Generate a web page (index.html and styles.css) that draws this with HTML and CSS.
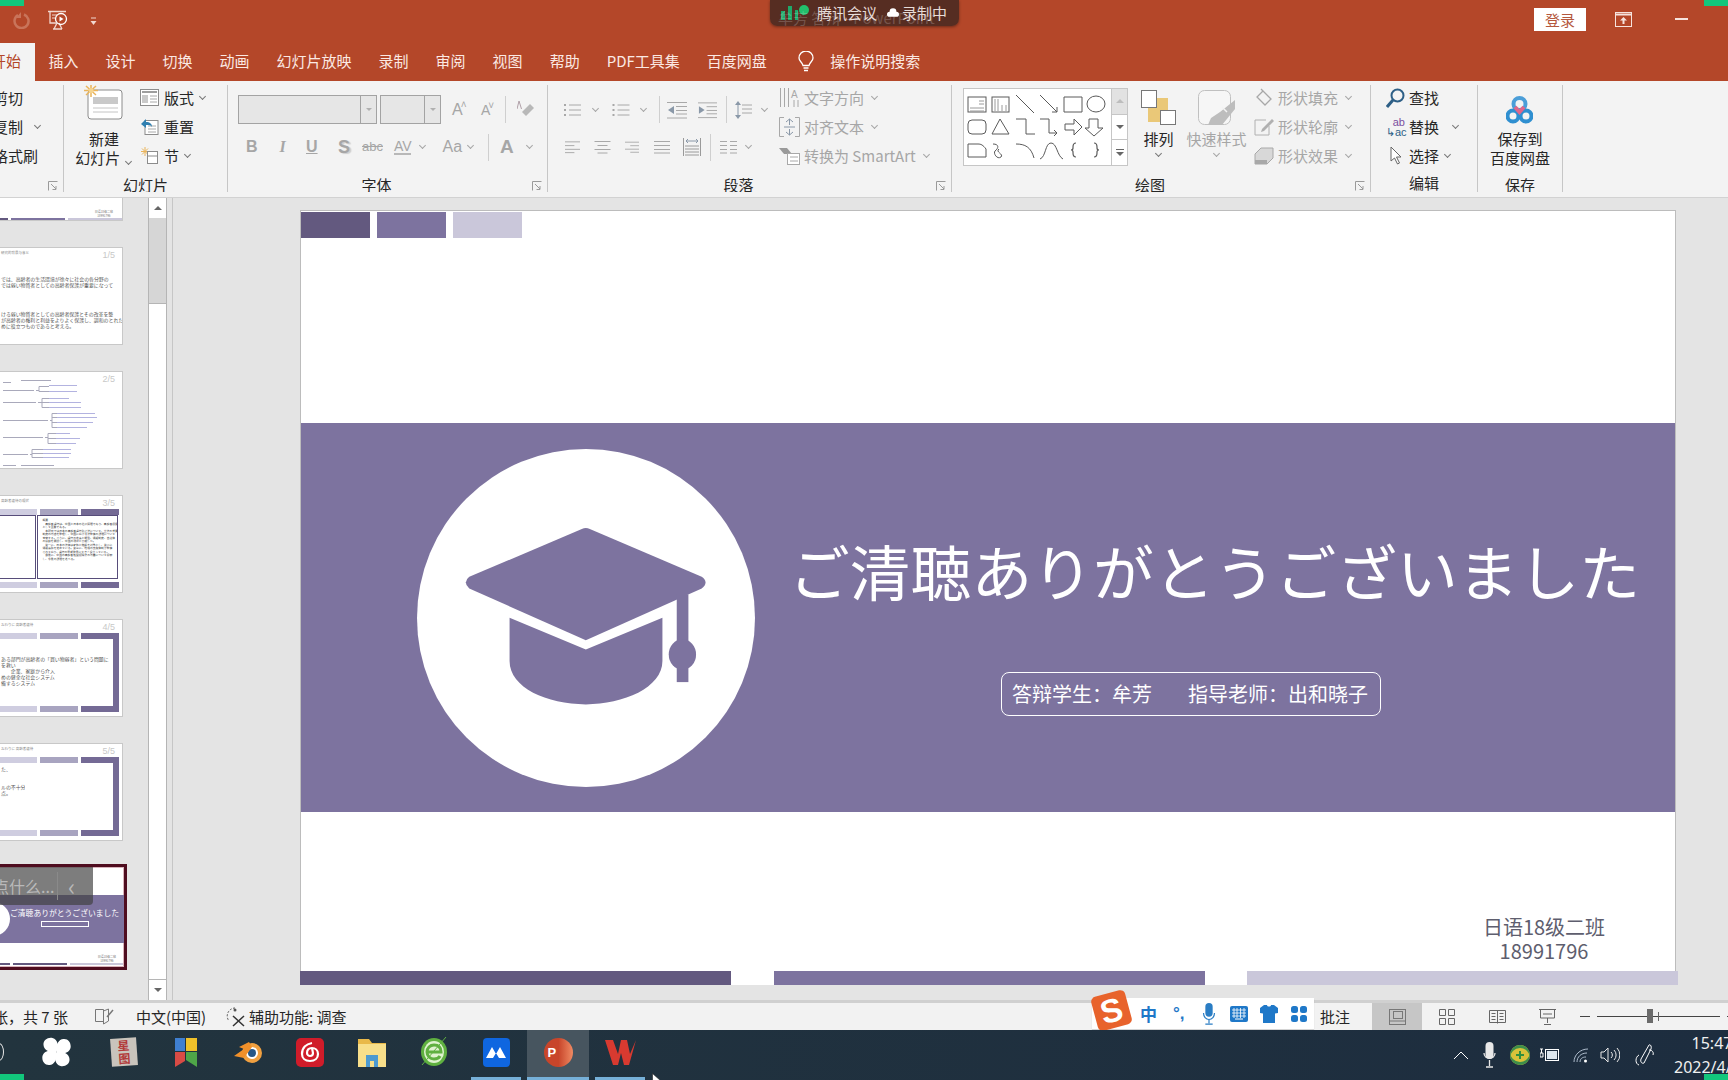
FILE: index.html
```html
<!DOCTYPE html>
<html lang="zh">
<head>
<meta charset="utf-8">
<title>PowerPoint</title>
<link rel="stylesheet" href="styles.css">
</head>
<body>
<svg class="defs" width="0" height="0">
  <symbol id="lines" viewBox="0 0 18 16"><path d="M6 3h12M6 8h12M6 13h12" stroke="#a8a8a8" fill="none"/><path d="M1 2h2v2H1zM1 7h2v2H1zM1 12h2v2H1z" fill="#a8a8a8"/></symbol>
  <symbol id="outdent" viewBox="0 0 20 18"><path d="M0 1.500h20M9 5.500h11M9 9.500h11M9 13h11M0 17h20" stroke="#a8a8a8" fill="none"/><path d="M1 9l6-4v8z" fill="#8a98a8"/></symbol>
  <symbol id="indent" viewBox="0 0 20 18"><path d="M0 1.500h20M9 5.500h11M9 9.500h11M9 13h11M0 17h20" stroke="#a8a8a8" fill="none"/><path d="M7 9l-6-4v8z" fill="#8a98a8"/></symbol>
  <symbol id="al" viewBox="0 0 16 14"><path d="M0 1.500h16M0 5.500h10M0 9.500h16M0 13h10" stroke="#a8a8a8" fill="none"/></symbol>
  <symbol id="ac" viewBox="0 0 16 14"><path d="M0 1.500h16M3 5.500h10M0 9.500h16M3 13h10" stroke="#a8a8a8" fill="none"/></symbol>
  <symbol id="ar" viewBox="0 0 16 14"><path d="M0 1.500h16M6 5.500h10M0 9.500h16M6 13h10" stroke="#a8a8a8" fill="none"/></symbol>
  <symbol id="launch" viewBox="0 0 10 10"><path d="M.5 9.500V.5h9M3 3l5 5M8 5v3.500H4.500" stroke="#9a9a9a" fill="none"/></symbol>
  <symbol id="petal" viewBox="0 0 29 30"><path d="M14.500 15C9 16 2 14 1.500 8 1 3 6 0 10.500 1 16 2.500 17 9 14.500 15z" fill="#fff"/></symbol>
</svg>

<div class="app">
  <header class="titlebar">
    <svg class="undo" width="18" height="18" viewBox="0 0 18 18"><path d="M11 3.500A7 7 0 1 1 5 4" fill="none" stroke="#c9745a" stroke-width="2.500"/><path d="M8 1v6H3z" fill="#c9745a"/></svg>
    <svg class="qat-show" width="20" height="20" viewBox="0 0 20 20"><path d="M0 1.500h18M2 2v11h6M5 19h9M9 13l-3 6M11 13l3 6" stroke="#f1d8d0" fill="none" stroke-width="1.300"/><path d="M4 5h5M4 8h3" stroke="#f1d8d0"/><circle cx="13" cy="9" r="5.500" fill="none" stroke="#fff" stroke-width="1.300"/><path d="M11.500 6.500l4 2.500-4 2.500z" fill="#fff"/></svg>
    <svg class="qat-more" width="7" height="9" viewBox="0 0 7 9"><path d="M1 1h5" stroke="#f1d8d0"/><path d="M.5 4h6L3.500 8z" fill="#f1d8d0"/></svg>
    <button class="login">登录</button>
    <svg class="ribbon-opt" width="17" height="15" viewBox="0 0 17 15"><rect x=".5" y=".5" width="16" height="14" fill="none" stroke="#f6e3dd"/><path d="M1 2.500h15" stroke="#f6e3dd" stroke-width="2"/><path d="M8.500 5l3.500 3.500H9.500V12h-2V8.500H5z" fill="#f6e3dd"/></svg>
    <span class="minimize"></span>
  </header>

  <nav class="tabs">
    <span class="tab active">开始</span>
    <span class="tab">插入</span>
    <span class="tab">设计</span>
    <span class="tab">切换</span>
    <span class="tab">动画</span>
    <span class="tab">幻灯片放映</span>
    <span class="tab">录制</span>
    <span class="tab">审阅</span>
    <span class="tab">视图</span>
    <span class="tab">帮助</span>
    <span class="tab">PDF工具集</span>
    <span class="tab">百度网盘</span>
    <svg class="bulb" width="16" height="21" viewBox="0 0 16 21"><path d="M5 14.500C4 11 1 10 1 7a7 7 0 0 1 14 0c0 3-3 4-4 7.500z" fill="none" stroke="#fff" stroke-width="1.300"/><path d="M5.500 17h5M6 19.500h4" stroke="#fff" stroke-width="1.500"/></svg>
    <span class="tab search">操作说明搜索</span>
  </nav>

  <section class="ribbon">
    <div class="group g1">
      <div class="rows clip-left">
        <div class="row">剪切</div>
        <div class="row">复制<i class="chev ml-copy"></i></div>
        <div class="row">格式刷</div>
      </div>
      <svg class="launcher" width="10" height="10"><use href="#launch"/></svg>
    </div>

    <div class="group g2">
      <div class="body">
        <div class="big big-new">
          <svg class="big-ic" width="40" height="36" viewBox="0 0 40 36"><rect x="4" y="6" width="34" height="29" rx="3" fill="#fff" stroke="#8c8c8c"/><rect x="9" y="13" width="25" height="7" fill="#c9c9c9"/><path d="M9 24h25M9 28h25" stroke="#c4c4c4"/><g stroke="#eab45a" stroke-width="1.500"><path d="M7 0v13M0 6.500h14M2 2l10 9M12 2L2 11"/></g><circle cx="7" cy="6.500" r="2.500" fill="#f5d48f"/></svg>
          <span>新建</span>
          <span>幻灯片<i class="chev ml6"></i></span>
        </div>
        <div class="rows small-col">
          <div class="row"><svg class="mr5" width="19" height="17" viewBox="0 0 19 17"><rect x=".5" y=".5" width="18" height="16" fill="#fff" stroke="#8c8c8c"/><path d="M2 3h15" stroke="#9e9e9e" stroke-width="2"/><rect x="2" y="6" width="6" height="8" fill="#c9c9c9"/><path d="M10 7h7M10 10h7M10 13h7" stroke="#a8a8a8"/></svg>版式<i class="chev ml6"></i></div>
          <div class="row"><svg class="mr5" width="19" height="17" viewBox="0 0 19 17"><rect x="5" y="2.500" width="13" height="14" fill="#fff" stroke="#8c8c8c"/><path d="M8 8h8M8 11h8M8 14h8" stroke="#a8a8a8"/><path d="M1 6l5-5v3c4 0 6 2 6 5-1-2-3-2-6-2v3z" fill="#2f7fb0"/></svg>重置</div>
          <div class="row"><svg class="mr5" width="19" height="17" viewBox="0 0 19 17"><path d="M5 0v9M1 4.500h8M2 1.500l6 6M8 1.500l-6 6" stroke="#eab45a"/><rect x="7.500" y="4.500" width="10" height="12" fill="#fff" stroke="#8c8c8c"/><path d="M7 9h11" stroke="#8c8c8c"/></svg>节<i class="chev ml6"></i></div>
        </div>
      </div>
      <div class="glabel">幻灯片</div>
    </div>

    <div class="group g3">
      <div class="body col">
        <div class="irow top-row p10">
          <div class="combo c-font"><b></b></div>
          <div class="combo c-size"><b></b></div>
          <span class="dis gl w13 ml11">A<sup>˄</sup></span>
          <span class="dis gl w11 ml16 sm">A<sup>˅</sup></span>
          <i class="vsep ml13"></i>
          <svg class="ml11" width="18" height="20" viewBox="0 0 18 20"><path d="M9 16l8-8-4-4-8 8z" fill="#b8b8b8"/><path d="M2 1l-2 8M2 1l2.500 8" stroke="#b0a0a8" fill="none"/></svg>
        </div>
        <div class="irow second-row p18">
          <span class="dis gl b w10">B</span>
          <span class="dis gl it w9 ml22">I</span>
          <span class="dis gl u w11 ml19">U</span>
          <span class="dis gl b shadow w10 ml21">S</span>
          <span class="dis gl strike w20 ml14">abc</span>
          <span class="dis gl av w17 ml12">AV</span>
          <i class="chev ml9"></i>
          <span class="dis gl w18 ml16">Aa</span>
          <i class="chev ml7"></i>
          <i class="vsep ml14"></i>
          <span class="dis gl big-a w13 ml11">A</span>
          <i class="chev ml14"></i>
        </div>
      </div>
      <div class="glabel off">字体</div>
      <svg class="launcher" width="10" height="10"><use href="#launch"/></svg>
    </div>

    <div class="group g4">
      <div class="body">
        <div class="col para">
          <div class="irow top-row p15">
            <svg width="18" height="16"><use href="#lines"/></svg><i class="chev ml12"></i>
            <svg class="ml11" width="19" height="16"><use href="#lines"/></svg><i class="chev ml11"></i>
            <i class="vsep ml12"></i>
            <svg class="ml7" width="20" height="18"><use href="#outdent"/></svg>
            <svg class="ml11" width="19" height="18"><use href="#indent"/></svg>
            <i class="vsep ml9"></i>
            <svg class="ml8" width="17" height="18" viewBox="0 0 17 18"><path d="M7 4h10M7 8h10M7 12h10" stroke="#a8a8a8"/><path d="M3 0l3 4H0zM3 18l3-4H0zM2.500 4h1v10h-1z" fill="#8a98a8"/></svg><i class="chev ml10"></i>
          </div>
          <div class="irow second-row p17">
            <svg width="15" height="14"><use href="#al"/></svg>
            <svg class="ml14" width="17" height="14"><use href="#ac"/></svg>
            <svg class="ml14" width="14" height="14"><use href="#ar"/></svg>
            <svg class="ml15" width="16" height="14" viewBox="0 0 16 14"><path d="M0 1.500h16M0 5.500h16M0 9.500h16M0 13h16" stroke="#a8a8a8"/></svg>
            <svg class="ml13" width="18" height="20" viewBox="0 0 18 20"><path d="M.5 1v18M17.500 1v18M2 9h14M2 12h14M2 15h14M2 18h14" stroke="#9a9a9a"/><path d="M3 4h12M5 2L3 4l2 2M13 2l2 2-2 2" stroke="#8a98a8" fill="none"/></svg>
            <i class="vsep ml9"></i>
            <svg class="ml9" width="17" height="14" viewBox="0 0 17 14"><path d="M0 1.500h7M0 5.500h7M0 9.500h7M0 13h7M10 1.500h7M10 5.500h7M10 9.500h7M10 13h7" stroke="#a8a8a8"/></svg>
            <i class="chev ml9"></i>
          </div>
        </div>
        <div class="rows dis-col">
          <div class="row"><svg class="mr4" width="21" height="20" viewBox="0 0 21 20"><path d="M1.500 0v19M5.500 0v19M9.500 0v19M15 12v7M19 12v7" stroke="#a8a8a8"/><text class="svgA" x="12" y="10">A</text></svg>文字方向<i class="chev ml8"></i></div>
          <div class="row"><svg class="mr4" width="21" height="20" viewBox="0 0 21 20"><path d="M5 .5H.5v19H5M16 .5h4.500v19H16" stroke="#a8a8a8" fill="none"/><path d="M10.500 2v6M10.500 12v6M7 5l3.500-3L14 5M7 15l3.500 3L14 15M5 10h11" stroke="#8a98a8" fill="none"/></svg>对齐文本<i class="chev ml8"></i></div>
          <div class="row"><svg class="mr4" width="21" height="18" viewBox="0 0 21 18"><path d="M0 1h8l5 6H5z" fill="#9a9a9a"/><rect x="8.500" y="6.500" width="12" height="11" fill="#fff" stroke="#a8a8a8"/><path d="M11 10h8M11 14h8" stroke="#a8a8a8"/></svg>转换为 SmartArt<i class="chev ml8"></i></div>
        </div>
      </div>
      <div class="glabel off">段落</div>
      <svg class="launcher" width="10" height="10"><use href="#launch"/></svg>
    </div>

    <div class="group g5">
      <div class="body">
        <div class="gallery">
          <svg width="147" height="76" viewBox="1 0 147 76">
            <g fill="none" stroke="#5a5a5a">
              <rect x="5" y="8" width="18" height="15"/><path d="M7 19h14M7 22h14M16 12h5M16 15h5" stroke="#9a9a9a"/>
              <rect x="29" y="8" width="17" height="15"/><path d="M32 10v12M35 10v12M39 16v6M43 16v6" stroke="#9a9a9a"/>
              <path d="M53 6l18 18M77 6l17 17M94 23v-5M94 23h-5M101 8h18v15h-18zM142 15a9 8 0 1 1-18 0 9 8 0 1 1 18 0z"/>
              <rect x="5" y="31" width="18" height="14" rx="4"/><path d="M37 30l-8 15h17zM53 30h10v15h9M77 30h9v14h8M91 41l3 3-3 3M102 35h9v-5l8 8-8 8v-5h-9zM126 30h9v9h5l-9 8-9-8h4z"/>
              <path d="M5 55h10c3 0 5 1 8 5v8H5v-7zM30 55c6 0 6 4 2 7-2 2 2 9 6 6 3-3-6-5-2-8M53 55c9 0 15 3 18 14M77 70c6-2 5-16 11-16 6 0 6 13 12 16"/>
              <path d="M113 54c-3 0-3 2-3 4v1c0 1-1 2-2 2 1 0 2 1 2 2v1c0 2 0 4 3 4M131 54c3 0 3 2 3 4v1c0 1 1 2 2 2-1 0-2 1-2 2v1c0 2 0 4-3 4" stroke-width="1.200"/>
            </g>
          </svg>
          <div class="gscroll">
            <span class="gs-btn active"><i class="up"></i></span>
            <span class="gs-btn"><i class="down"></i></span>
            <span class="gs-btn stack"><i class="down"></i></span>
          </div>
        </div>
        <div class="big w57 big-arr">
          <svg class="big-ic2" width="35" height="35" viewBox="0 0 35 35"><rect x="7" y="8" width="20" height="24" fill="#eac878"/><rect x=".5" y=".5" width="15" height="17" fill="#fff" stroke="#777"/><rect x="19.500" y="20.500" width="15" height="14" fill="#fff" stroke="#777"/></svg>
          <span>排列</span>
          <i class="chev"></i>
        </div>
        <div class="big w59 dis-big">
          <svg class="big-ic2" width="38" height="35" viewBox="0 0 38 35"><rect x=".5" y=".5" width="32" height="34" rx="6" fill="#f6f6f6" stroke="#c0c0c0"/><path d="M37 10v9L24 35H10l3-7 9-6z" fill="#bdbdbd"/><path d="M24 17l5 5" stroke="#f3f3f3" stroke-width="1.500"/></svg>
          <span>快速样式</span>
          <i class="chev"></i>
        </div>
        <div class="rows dis-col shape-col">
          <div class="row"><svg class="mr4" width="20" height="20" viewBox="0 0 20 20"><path d="M9 3l8 8-6 6-8-8zM7 1l2 2" fill="none" stroke="#a8a8a8" stroke-width="1.300"/></svg>形状填充<i class="chev ml8"></i></div>
          <div class="row"><svg class="mr4" width="20" height="20" viewBox="0 0 20 20"><path d="M12 3H1v15h14V9" fill="none" stroke="#b0b0b0"/><path d="M8 12l10-10 2 2-10 10-3 1z" fill="#b0b0b0"/></svg>形状轮廓<i class="chev ml8"></i></div>
          <div class="row"><svg class="mr4" width="20" height="20" viewBox="0 0 20 20"><path d="M7 2h12v10l-6 6H1V8z" fill="#d8d8d8" stroke="#a8a8a8"/><path d="M1 14h12v4H1z" fill="#a8a8a8"/></svg>形状效果<i class="chev ml8"></i></div>
        </div>
      </div>
      <div class="glabel off">绘图</div>
      <svg class="launcher" width="10" height="10"><use href="#launch"/></svg>
    </div>

    <div class="group g6">
      <div class="rows edit">
        <div class="row"><svg class="mr4" width="19" height="20" viewBox="0 0 19 20"><circle cx="11.500" cy="7.500" r="6" fill="none" stroke="#2d5f86" stroke-width="2"/><path d="M7 12l-6 7" stroke="#2d5f86" stroke-width="3"/></svg>查找</div>
        <div class="row"><span class="abac mr4"><em>ab</em><u>↳ac</u></span>替换<i class="chev ml14"></i></div>
        <div class="row"><svg class="mr8 ml4" width="11" height="19" viewBox="0 0 11 19"><path d="M1 1v14l3.500-3 3 6 2-1-3-6h4.500z" fill="#fff" stroke="#666"/></svg>选择<i class="chev ml6"></i></div>
      </div>
      <div class="glabel">编辑</div>
    </div>

    <div class="group g7">
      <div class="body center">
        <div class="big bd">
          <svg class="big-ic3" width="27" height="28" viewBox="0 0 27 28"><circle cx="13.500" cy="8" r="6" fill="none" stroke="#4b9ed8" stroke-width="4"/><circle cx="7" cy="20" r="5.500" fill="none" stroke="#2f8fd0" stroke-width="4"/><circle cx="20" cy="20" r="5.500" fill="none" stroke="#2f8fd0" stroke-width="4"/><path d="M9 11l4.500 5 4.500-5" fill="none" stroke="#e0668a" stroke-width="4"/></svg>
          <span>保存到</span>
          <span>百度网盘</span>
        </div>
      </div>
      <div class="glabel">保存</div>
    </div>
  </section>

  <main class="workspace">
    <aside class="thumbs">
      <div class="thumb partial">
        <div class="mini-no">日语18级二班<br>18991796</div>
        <div class="tbars"><i class="d"></i><i class="m"></i><i class="l"></i></div>
      </div>

      <div class="thumb">
        <div class="thead"><span class="tt">研究的背景与意义</span><span class="num">1/5</span></div>
        <div class="para-t one">では、高齢者の生活環境が徐々に社会の各分野の<br>では弱い物質者としての高齢者保護が重要になって</div>
        <div class="para-t two">ける弱い物質者としての高齢者保護とその改革を整<br>が高齢者の権利と利益をよりよく保護し、調和のとれた<br>めに役立つものであると考える。</div>
      </div>

      <div class="thumb">
        <div class="thead abs-free"><span class="num">2/5</span></div>
        <svg class="mindmap" width="123" height="97" viewBox="0 0 123 97">
          <g stroke="#8d8da5" fill="none" opacity=".75">
            <path d="M2 10.500h8M20 8.500h30M2 18.500h31M2 30.500h33M2 48.500h45M2 65.500h40M2 82.500h25M2 93.500h13M20 93.500h33"/>
            <path d="M35 18.500h3M38 14.500v5M38 14.500h10M38 19.500h10"/>
            <path d="M37 30.500h4M41 26.500v9M41 26.500h7M41 35.500h7M41 30.500h7"/>
            <path d="M49 48.500h2M51 41.500v14M51 41.500h5M51 45.500h5M51 50.500h5M51 55.500h5"/>
            <path d="M44 65.500h3M47 61.500v10M47 61.500h8M47 66.500h8M47 71.500h8"/>
            <path d="M29 82.500h2M31 77.500v8M31 77.500h11M31 81.500h11M31 85.500h11"/>
          </g>
          <g stroke="#9a9ad6" fill="none" opacity=".75">
            <path d="M48 13.500h28M48 19.500h28M48 26.500h20M48 30.500h32M48 35.500h32M56 41.500h38M56 45.500h40M56 50.500h36M56 55.500h30M55 61.500h14M55 66.500h24M55 71.500h20M42 77.500h28M42 81.500h28M42 85.500h26"/>
          </g>
        </svg>
      </div>

      <div class="thumb">
        <div class="thead"><span class="tt">高齢者虐待の現状</span><span class="num">3/5</span></div>
        <div class="tbars top"><i class="l"></i><i class="m2"></i><i class="d"></i></div>
        <div class="tbody two-box">
          <div class="tbox left"><span>高齢者の権利を</span></div>
          <div class="tbox right">概要<br>　高齢者虐待は、中国と日本の社会問題であり、高齢者保護制度<br>として重要である。<br>　本研究では日本の高齢者虐待防止法について、立法の背景と<br>制度の内容を整理し、中国における法整備の課題について<br>考察する。さらに、虐待の定義と類型、通報制度、自治体<br>の役割を検討し、中国の現状と比較した。<br>　第一に、日本の法律は家族と施設を対象とし、第二に<br>通報義務を定めている。第三に、地域の支援体制が整備<br>されており、虐待の早期発見に大きく役立っている。<br>　最後に、中国の高齢者権益保障法の改善について提案<br>し、今後の課題を述べる。</div>
        </div>
        <div class="tbars bottom"><i class="l"></i><i class="m2"></i><i class="d"></i></div>
      </div>

      <div class="thumb">
        <div class="thead"><span class="tt">おわりに 高齢者虐待</span><span class="num">4/5</span></div>
        <div class="tbars top"><i class="l"></i><i class="m2"></i><i class="d"></i></div>
        <div class="tbody framed"><div class="para-t">ある部門が高齢者の「買い物弱者」という問題に<br>を救い<br>　　企業、家庭から介入<br>めの健全な社会システム<br>備するシステム</div><b></b></div>
        <div class="tbars bottom"><i class="l"></i><i class="m2"></i><i class="d"></i></div>
      </div>

      <div class="thumb">
        <div class="thead"><span class="tt">おわりに 高齢者虐待</span><span class="num">5/5</span></div>
        <div class="tbars top"><i class="l"></i><i class="m2"></i><i class="d"></i></div>
        <div class="tbody framed"><div class="para-t low">た、<br><br><br>ルの不十分<br>点。</div><b></b></div>
        <div class="tbars bottom"><i class="l"></i><i class="m2"></i><i class="d"></i></div>
      </div>

      <div class="thumb current">
        <div class="cur-top"></div>
        <div class="cur-band">
          <span class="cur-circle"></span>
          <div class="cur-text">
            <span>ご清聴ありがとうございました</span>
            <i></i>
          </div>
        </div>
        <div class="cur-foot"><span>日语18级二班<br>18991796</span></div>
        <div class="tbars"><i class="d"></i><i class="d"></i><i class="l"></i></div>
        <div class="popup"><span class="ptext">点什么...</span><i></i><span class="pback">‹</span></div>
      </div>
    </aside>

    <div class="vscroll">
      <span class="vs-btn"><i class="up"></i></span>
      <span class="vs-track"></span>
      <span class="vs-thumb"></span>
      <span class="vs-btn"><i class="down"></i></span>
    </div>

    <div class="canvas">
      <article class="slide">
        <div class="blocks"><i class="dark"></i><i class="mid"></i><i class="light"></i></div>
        <div class="band">
          <div class="circle">
            <svg width="338" height="338" viewBox="50 53 1015 1015">
              <path fill="#7d739f" d="M545 293Q557 288 569 293L905 437Q928 453 905 472L557 627 207 472Q186 453 207 437Z"/>
              <path fill="#7d739f" d="M328 560L557 655 787 560V690C787 770 670 820 557 820 440 820 328 770 328 690Z"/>
              <rect fill="#7d739f" x="830" y="490" width="35" height="263"/>
              <ellipse fill="#7d739f" cx="847" cy="670" rx="41" ry="46"/>
            </svg>
          </div>
          <div class="thanks">
            <h1>ご清聴ありがとうございました</h1>
            <div class="pill"><span>答辩学生：牟芳</span><span>指导老师：出和晓子</span></div>
          </div>
        </div>
        <div class="slide-foot"><p>日语18级二班<br>18991796</p></div>
        <div class="bars"><i class="dark"></i><i class="mid"></i><i class="light"></i></div>
      </article>
    </div>
  </main>

  <footer class="status">
    <span class="st-count">张，共 7 张</span>
    <svg class="st-notes" width="19" height="18" viewBox="0 0 19 18"><path d="M.5 1.500h8v12H.5zM8.500 3l5-2v12l-5 3z" fill="none" stroke="#777"/><path d="M12 9l6-7" stroke="#777" stroke-width="1.500"/></svg>
    <span class="st-lang">中文(中国)</span>
    <svg class="st-acc" width="20" height="20" viewBox="0 0 20 20"><path d="M9 1a8 8 0 0 0-6 13" fill="none" stroke="#555" stroke-dasharray="2 1.500"/><path d="M7 9l11 10M18 9L7 19" stroke="#333" stroke-width="1.500"/><circle cx="9" cy="3" r="1.500" fill="#555"/></svg>
    <span class="st-a11y">辅助功能: 调查</span>
    <span class="st-comment">批注</span>
    <span class="view active"><svg width="17" height="16" viewBox="0 0 17 16"><rect x=".5" y=".5" width="16" height="15" fill="none" stroke="#777"/><rect x="4.500" y="2.500" width="9" height="7" fill="none" stroke="#777"/><path d="M.5 12h16" stroke="#777"/></svg></span>
    <span class="view"><svg width="16" height="16" viewBox="0 0 16 16"><path d="M.5.5h6v6h-6zM9.500.5h6v6h-6zM.5 9.500h6v6h-6zM9.500 9.500h6v6h-6z" fill="none" stroke="#666"/></svg></span>
    <span class="view"><svg width="17" height="16" viewBox="0 0 17 16"><path d="M.5 1.500h16v12h-16zM8.500 1.500v13M2.500 4.500h4M2.500 7.500h4M2.500 10.500h4M10.500 4.500h4M10.500 7.500h4M10.500 10.500h4" fill="none" stroke="#666"/></svg></span>
    <span class="view"><svg width="17" height="16" viewBox="0 0 17 16"><path d="M0 .5h17M1.500 1v8h14V1M8.500 9v5M5 15.500h7M4 5h9" fill="none" stroke="#666"/></svg></span>
    <div class="zoom"><i class="minus"></i><span class="track"><b></b><u></u></span><i class="plus"></i></div>

    <div class="ime">
      <span class="ime-s">S</span>
      <span class="ime-zh">中</span>
      <span class="ime-punc">°,</span>
      <svg class="ime-mic" width="14" height="24" viewBox="0 0 14 24"><rect x="3" y="0" width="8" height="15" rx="4" fill="#2a7dc4"/><path d="M1 11a6 7 0 0 0 12 0M7 18v4M3 23h8" fill="none" stroke="#2a7dc4" stroke-width="1.300"/></svg>
      <svg class="ime-kb" width="18" height="16" viewBox="0 0 18 16"><rect width="18" height="16" rx="2" fill="#1f78c8"/><path d="M2 4h14M2 7h14M2 10h14M4 2v10M7 2v10M10.500 2v10M14 2v10" stroke="#fff" stroke-width=".8"/><path d="M5 13h8" stroke="#fff"/></svg>
      <svg class="ime-shirt" width="18" height="18" viewBox="0 0 18 18"><path d="M4 0h3c0 2 4 2 4 0h3l4 3v5l-3 .5V18H3V8.500L0 8V3z" fill="#1f78c8"/></svg>
      <svg class="ime-apps" width="16" height="16" viewBox="0 0 16 16"><rect width="7" height="7" rx="2.500" fill="#1f78c8"/><rect x="9" width="7" height="7" rx="2.500" fill="#1f78c8"/><rect y="9" width="7" height="7" rx="2.500" fill="#1f78c8"/><rect x="9" y="9" width="7" height="7" rx="2.500" fill="#1f78c8"/></svg>
    </div>
  </footer>

  <div class="taskbar">
    <span class="tb-start"></span>
    <span class="tb tb-first"><svg width="29" height="30" viewBox="0 0 29 30"><use href="#petal"/><use href="#petal" transform="rotate(90 14.500 15)"/><use href="#petal" transform="rotate(180 14.500 15)"/><use href="#petal" transform="rotate(270 14.500 15)"/></svg></span>
    <span class="tb"><span class="ic-xing">星<br>图</span></span>
    <span class="tb"><svg width="22" height="29" viewBox="0 0 22 29"><path d="M0 0h10v13H0z" fill="#3f7fd0"/><path d="M11 0h11v13H11z" fill="#efc12a"/><path d="M0 14h10v9l-10 6z" fill="#d94b45"/><path d="M11 14h11v15l-11-7z" fill="#4fa648"/></svg></span>
    <span class="tb"><svg width="29" height="24" viewBox="0 0 29 24"><circle cx="18" cy="13" r="10" fill="#f0a040"/><circle cx="18" cy="13" r="6" fill="#fff"/><circle cx="18" cy="13" r="4" fill="#265787"/><path d="M0 16l10-7-5-2 10-5 3 5-8 11z" fill="#f0902a"/></svg></span>
    <span class="tb"><span class="ic-163"><svg width="20" height="22" viewBox="0 0 20 22"><path d="M12 2C6 3 2 7 2 13c0 4 3 7 8 7s8-3 8-7-3-6-6-6c-3 0-5 2-5 5 0 2 2 3 3 3 2 0 3-1 3-3l-1-5" fill="none" stroke="#fff" stroke-width="2.200"/></svg></span></span>
    <span class="tb"><svg width="28" height="29" viewBox="0 0 28 29"><path d="M0 1h11l3 4h14v24H0z" fill="#e9b949"/><path d="M0 6h28v23H0z" fill="#f8df8a"/><path d="M8 29V17h12v12h-4v-6h-4v6z" fill="#4d9ad0"/></svg></span>
    <span class="tb"><svg width="28" height="34" viewBox="0 0 28 34"><ellipse cx="14" cy="17" rx="13" ry="14" fill="#5fb040"/><ellipse cx="14" cy="17" rx="10" ry="11" fill="#dff2cf"/><path d="M7 17h14c0-5-3-7-7-7s-7 3-7 7 3 7 7 7c3 0 5-1 6-3" fill="none" stroke="#5fb040" stroke-width="3"/><path d="M2 30L26 2" stroke="#5fb040" stroke-width="1"/></svg></span>
    <span class="tb run"><span class="ic-mt"><svg width="20" height="14" viewBox="0 0 20 14"><path d="M0 13L6 2l4 7 4-7 6 11h-7l-3-5-3 5z" fill="#fff"/></svg></span></span>
    <span class="tb run on"><span class="ic-ppt"><em>P</em></span></span>
    <span class="tb run"><svg width="31" height="28" viewBox="0 0 31 28"><path d="M0 2h8l5 14 3-14h6l3 14 6-14-7 25h-5l-3-12-3 12H8z" fill="#d83a30"/></svg></span>
    <svg class="cursor" width="9" height="14" viewBox="0 0 9 14"><path d="M.5 .5v11l3-2.500 2 4.500 2-1-2-4.500h3.500z" fill="#fff" stroke="#222" stroke-width=".6"/></svg>
    <div class="tray">
      <svg class="t1" width="16" height="9" viewBox="0 0 16 9"><path d="M1 8l7-7 7 7" fill="none" stroke="#fff"/></svg>
      <svg class="t2" width="13" height="26" viewBox="0 0 13 26"><rect x="2.500" width="8" height="17" rx="4" fill="#e8e8e8"/><path d="M1 11c0 7 11 7 11 0M6.500 18v6M3 25h7" fill="none" stroke="#e8e8e8" stroke-width="1.300"/></svg>
      <span class="t3"><i></i></span>
      <svg class="t4" width="19" height="14" viewBox="0 0 19 14"><rect x="5.500" y="1.500" width="13" height="11" fill="none" stroke="#fff"/><rect x="7" y="3" width="10" height="8" fill="#dce6ee"/><path d="M0 1h3M1.500 1v4M0 5h3v4H0z" stroke="#fff" fill="none"/></svg>
      <svg class="t5" width="16" height="15" viewBox="0 0 16 15"><path d="M1 14C1 7 7 1 15 1M4 14c0-5 4-9 10-9M7 14c0-3 2-5 6-5" fill="none" stroke="#aebccc"/><circle cx="12.500" cy="13" r="1.500" fill="#fff"/></svg>
      <svg class="t6" width="20" height="16" viewBox="0 0 20 16"><path d="M1 5h3l4-4v14l-4-4H1z" fill="none" stroke="#e8e8e8"/><path d="M11 5a4 4 0 0 1 0 6M14 3a7 7 0 0 1 0 10M17 1a10 10 0 0 1 0 14" fill="none" stroke="#e8e8e8"/></svg>
      <svg class="t7" width="20" height="22" viewBox="0 0 20 22"><path d="M14 1l-8 14c-1 3 1 5 3 4l7-14c1-3-1-5-2-4zM4 11C0 13 0 20 4 21M14 6c3 0 5 2 4 5" fill="none" stroke="#fff"/></svg>
      <div class="clock"><span>15:47</span><span>2022/4/25</span></div>
    </div>
  </div>

  <div class="meeting">
    <span class="ghost">牟芳 答辩 - PowerPoint</span>
    <svg width="24" height="15" viewBox="0 0 24 15"><path d="M2 6h4v9H2zM9 1h4v14H9zM16 5h3v10h-3z" fill="#1fa86a"/></svg>
    <i class="dot"></i>
    <span class="mt-name">腾讯会议</span>
    <svg class="cloud" width="12" height="9" viewBox="0 0 14 10"><path d="M3 10a3 3 0 0 1 0-6 4 4 0 0 1 8 0 3 3 0 0 1 0 6z" fill="#fff"/></svg>
    <span class="mt-rec">录制中</span>
  </div>

  <i class="mark m-tl"></i><i class="mark m-tr"></i><i class="mark m-bl"></i><i class="mark m-br"></i>
</div>
</body>
</html>
```

FILE: styles.css
```css
* { box-sizing: border-box; }
html, body { margin: 0; padding: 0; }
body { width: 1728px; height: 1080px; overflow: hidden; background: #e4e4e4; font-family: "Noto Sans CJK SC", "Noto Sans", sans-serif; color: #262626; font-size: 15px; }
.defs { position: absolute; }
i, em { font-style: normal; }
.app { position: relative; width: 1728px; height: 1080px; overflow: hidden; display: flex; flex-direction: column; }

/* title bar */
.titlebar { height: 43px; background: #b44729; display: flex; align-items: center; flex: none; }
.undo { margin-left: 13px; margin-top: -4px; }
.qat-show { margin-left: 17px; margin-top: -4px; }
.qat-more { margin-left: 22px; margin-top: 0; }
.login { margin-left: 1437px; margin-top: -4px; width: 52px; height: 23px; border: 0; padding: 0; background: #fff; color: #b5583d; font: 15px/23px "Noto Sans CJK SC", sans-serif; }
.ribbon-opt { margin-left: 29px; margin-top: -5px; }
.minimize { margin-left: 43px; margin-top: -5px; width: 13px; height: 2px; background: #f6e3dd; }

/* tabs */
.tabs { height: 38px; background: #b44729; display: flex; align-items: stretch; margin-left: 0; flex: none; color: #fff; }
.tab { padding: 0 13.500px; line-height: 36px; color: #fbe9e3; flex: none; }
.tab.active { margin-left: -23px; padding-left: 14px; padding-right: 14px; width: 58px; background: #f3f3f3; color: #b44729; }
.bulb { margin: 8px 2px 0 18px; flex: none; }
.search { padding-left: 14px; }

/* ribbon */
.ribbon { height: 117px; background: #f3f3f3; border-bottom: 1px solid #d2d2d2; padding-top: 4px; display: flex; align-items: flex-start; flex: none; }
.group { position: relative; height: 107px; border-right: 1px solid #c6c6c6; overflow: hidden; flex: none; }
.g1 { width: 64px; }
.g2 { width: 164px; }
.g3 { width: 320px; }
.g4 { width: 404px; }
.g5 { width: 419px; }
.g6 { width: 107px; }
.g7 { width: 85px; }
.body { height: 87px; display: flex; }
.body.col, .col { flex-direction: column; display: flex; }
.body.center { justify-content: center; }
.rows { display: flex; flex-direction: column; margin-top: -2px; }
.row { height: 29px; display: flex; align-items: center; white-space: nowrap; flex: none; }
.clip-left { margin-left: -7px; }
.glabel { height: 20px; line-height: 26px; text-align: center; color: #262626; }
.glabel.off { padding-right: 22px; }
.launcher { position: absolute; right: 5px; bottom: 1px; }
.chev { display: inline-block; width: 5px; height: 5px; border-right: 1px solid #777; border-bottom: 1px solid #777; transform: rotate(45deg); margin: -3px 1.500px 0; flex: none; }
.ml-copy { margin-left: 12px; }
.big { display: flex; flex-direction: column; align-items: center; line-height: 19px; flex: none; white-space: nowrap; }
.big-new { width: 66px; margin-left: 7px; padding-top: 0; }
.big-ic { margin-bottom: 9px; margin-top: -1px; }
.big-ic2 { margin: 5px 0 4px; }
.big-ic3 { margin: 11px 0 5px; }
.big .chev { margin-top: 3px; }
.small-col { margin-left: 3px; }
.w57 { width: 57px; }
.w59 { width: 59px; }
.big-arr { margin-left: 2px; }
.dis-big { color: #a6a6a6; }
.dis-col { color: #a6a6a6; }
.dis-col .chev, .dis-big .chev { border-color: #a6a6a6; }
.para { width: 231px; flex: none; }
.shape-col { margin-left: 8px; }

.irow { display: flex; align-items: center; flex: none; }
.irow > * { flex: none; }
.top-row { height: 29px; margin-top: 10px; }
.second-row { height: 22px; margin-top: 12px; }
.irow .chev { border-color: #a6a6a6; }
.combo { height: 29px; background: #e6e6e6; border: 1px solid #a3a3a3; position: relative; }
.combo b { position: absolute; right: 0; top: 0; bottom: 0; width: 16px; border-left: 1px solid #a3a3a3; }
.combo b::after { content: ""; position: absolute; left: 5px; top: 12px; border: 3px solid transparent; border-top-color: #b0b0b0; }
.c-font { width: 139px; }
.c-size { width: 61px; margin-left: 3px; }
.vsep { width: 1px; height: 27px; background: #cfcfcf; }
.dis { color: #a6a6a6; }
.gl { display: inline-block; text-align: center; line-height: 20px; white-space: nowrap; font-family: "Liberation Sans", sans-serif; font-size: 16px; }
.gl sup { font-size: 10px; line-height: 0; margin-left: -2px; }
.gl.sm { font-size: 14px; }
.gl.b { font-weight: 700; }
.gl.it { font-style: italic; font-weight: 700; font-family: "Liberation Serif", serif; }
.gl.u { text-decoration: underline; font-weight: 700; }
.gl.shadow { text-shadow: 2px 1px 1px #cfcfcf; font-size: 18px; }
.gl.strike { text-decoration: line-through; font-size: 13px; }
.gl.av { font-size: 14px; line-height: 14px; border-bottom: 2px solid #b8b8b8; }
.gl.big-a { font-size: 19px; font-weight: 700; }
.svgA { font: 10px "Liberation Sans", sans-serif; fill: #a8a8a8; }
.p10 { padding-left: 10px; }
.p15 { padding-left: 15px; }
.p17 { padding-left: 17px; }
.p18 { padding-left: 18px; }
.w9 { width: 9px; } .w10 { width: 10px; } .w11 { width: 11px; } .w13 { width: 13px; }
.w17 { width: 17px; } .w18 { width: 18px; } .w20 { width: 20px; }
.mr4 { margin-right: 4px; } .mr5 { margin-right: 5px; } .mr8 { margin-right: 8px; }
.ml4 { margin-left: 4px; } .ml6 { margin-left: 6px; } .ml7 { margin-left: 7px; } .ml8 { margin-left: 8px; }
.ml9 { margin-left: 9px; } .ml10 { margin-left: 10px; } .ml11 { margin-left: 11px; } .ml12 { margin-left: 12px; }
.ml13 { margin-left: 13px; } .ml14 { margin-left: 14px; } .ml15 { margin-left: 15px; } .ml16 { margin-left: 16px; }
.ml19 { margin-left: 19px; } .ml21 { margin-left: 21px; } .ml22 { margin-left: 22px; }

.gallery { width: 165px; height: 78px; margin: 3px 0 0 11px; background: #fff; border: 1px solid #c6c6c6; display: flex; flex: none; }
.gallery svg { flex: none; }
.gscroll { width: 17px; border-left: 1px solid #c6c6c6; display: flex; flex-direction: column; }
.gs-btn { flex: 1; border-bottom: 1px solid #c6c6c6; display: flex; align-items: center; justify-content: center; }
.gs-btn:last-child { border-bottom: 0; }
.gs-btn.active { background: #e2e2e2; }
.gs-btn.stack { flex-direction: column; gap: 2px; }
.gs-btn.stack::before { content: ""; width: 8px; height: 1px; background: #666; }
.up { width: 0; height: 0; border: 4px solid transparent; border-bottom-color: #666; border-top: 0; display: block; }
.down { width: 0; height: 0; border: 4px solid transparent; border-top-color: #666; border-bottom: 0; display: block; }
.gs-btn .up { border-bottom-color: #bdbdbd; }

.edit { padding-left: 15px; height: 87px; }
.abac { width: 19px; display: inline-flex; flex-direction: column; font: 11px/10px "Liberation Sans", sans-serif; text-align: right; }
.abac em { color: #7b4fa0; }
.abac u { color: #2d5f86; text-decoration: none; }

/* workspace */
.workspace { height: 805px; display: flex; flex: none; background: #e4e4e4; border-bottom: 3px solid #d0d0d0; }
.thumbs { width: 148px; height: 802px; overflow: hidden; display: flex; flex-direction: column; align-items: flex-start; gap: 26px; flex: none; }
.thumb { position: relative; width: 172px; height: 98px; margin-left: -49px; background: #fff; border: 1px solid #c8c8c8; flex: none; overflow: hidden; display: flex; flex-direction: column; }
.thumb.partial { height: 23px; justify-content: flex-end; align-items: stretch; border-top: 0; }
.mini-no { align-self: flex-end; margin-right: 9px; font-size: 3px; line-height: 4px; color: #777; text-align: center; }
.tbars { display: flex; gap: 3px; height: 2px; flex: none; justify-content: flex-end; margin: 0; }
.tbars .d { width: 54px; background: #63597f; }
.tbars .m { width: 54px; background: #7d739f; }
.tbars .l { width: 54px; background: #cac7da; }
.tbars .m2 { width: 38px; background: #a8a4c0; }
.tbars.top, .tbars.bottom { height: 6px; padding-right: 3px; }
.tbars.top .d, .tbars.bottom .d { width: 39px; background: #746a95; }
.tbars.top .l, .tbars.bottom .l { width: 87px; background: #cfcde0; }
.thead { height: 13px; display: flex; justify-content: space-between; align-items: flex-start; padding: 0 7px 0 49px; flex: none; }
.tt { font-size: 3.500px; line-height: 10px; color: #888; white-space: nowrap; }
.num { margin-left: auto; font: 9px/14px "Liberation Sans", sans-serif; color: #c8c8c8; }
.para-t { font-size: 4.900px; line-height: 6px; color: #555; white-space: nowrap; }
.para-t.one { padding-left: 49px; margin-top: 15px; }
.para-t.two { padding-left: 49px; margin-top: 23px; }
.abs-free { position: absolute; right: 0; top: 0; }
.mindmap { margin-left: 49px; flex: none; }
.tbody { flex: none; }
.two-box { display: flex; gap: 1px; height: 64px; padding: 0 4px 0 0; margin-bottom: 3px; justify-content: flex-end; }
.tbox { border: 1px solid #574d7a; height: 64px; font-size: 2.800px; line-height: 3.500px; color: #444; overflow: hidden; white-space: nowrap; }
.tbox.left { width: 85px; text-align: left; padding: 2px; }
.tbox.right { width: 81px; padding: 3px 4px; }
.framed { height: 67px; display: flex; justify-content: space-between; padding-right: 3px; }
.framed b { width: 6px; background: #746a95; flex: none; }
.framed .para-t { padding: 17px 0 0 49px; overflow: hidden; }
.framed .para-t.low { padding: 3px 0 0 49px; }

.thumb.current { height: 106px; margin-top: -3px; width: 176px; border: 3px solid #4f0d1f; outline: 1px solid #d9b3bb; outline-offset: -4px; }
.cur-top { height: 28px; flex: none; }
.cur-band { height: 48px; background: #7d739f; display: flex; flex: none; position: relative; }
.cur-circle { width: 34px; height: 34px; margin: 7px 0 0 22px; border-radius: 50%; background: #fff; flex: none; }
.cur-text { display: flex; flex-direction: column; align-items: center; margin-left: 0; padding-top: 12px; font-size: 7.800px; line-height: 11px; color: #fff; white-space: nowrap; }
.cur-text i { width: 48px; height: 6px; margin-top: 3px; border: 1px solid #fff; }
.cur-foot { flex: 1; display: flex; justify-content: flex-end; padding: 12px 8px 0 0; font-size: 3px; line-height: 4px; color: #777; text-align: center; }
.thumb.current .tbars { height: 2px; margin-bottom: 2px; }
.popup { position: absolute; left: 0; top: 0; width: 139px; height: 38px; padding-left: 39px; background: rgba(64, 64, 64, .68); border-radius: 0 0 4px 0; display: flex; align-items: center; color: #b9b9b9; font-size: 16px; white-space: nowrap; }
.ptext { width: 64px; overflow: hidden; flex: none; }
.popup i { width: 1px; height: 28px; background: #8a8a8a; flex: none; }
.pback { margin-left: 10px; font-size: 24px; line-height: 30px; }

.vscroll { width: 19px; height: 802px; border-left: 1px solid #b5b5b5; border-right: 1px solid #b5b5b5; display: flex; flex-direction: column; flex: none; }
.vs-btn { height: 20px; flex: none; background: #fff; display: flex; align-items: center; justify-content: center; }
.vs-track { height: 85px; background: #d6d6d6; flex: none; }
.vs-thumb { flex: 1; background: #fff; border-top: 1px solid #b5b5b5; border-bottom: 1px solid #b5b5b5; }

.canvas { flex: 1; height: 802px; margin-left: 5px; border-left: 1px solid #c6c6c6; padding: 12px 0 0 127px; }

/* slide */
.slide { width: 1376px; height: 775px; background: #fff; border-left: 1px solid #bcbcbc; border-top: 1px solid #bcbcbc; border-right: 1px solid #bcbcbc; display: flex; flex-direction: column; }
.blocks { display: flex; gap: 7px; padding-top: 1px; height: 27px; flex: none; }
.blocks i { width: 69px; height: 26px; }
.dark { background: #63597f; }
.mid { background: #7d739f; }
.light { background: #cac7da; }
.band { height: 389px; margin-top: 185px; background: #7d739f; display: flex; align-items: center; flex: none; }
.circle { width: 338px; height: 338px; margin-left: 116px; border-radius: 50%; background: #fff; flex: none; }
.circle svg { display: block; }
.thanks { margin-left: 34px; padding-top: 15px; color: #fff; }
.thanks h1 { margin: -4px 0 0; font-size: 60.800px; line-height: 80px; font-weight: 400; white-space: nowrap; letter-spacing: 0; }
.pill { width: 380px; height: 44px; margin: 62px 0 0 212px; border: 1px solid #fff; border-radius: 8px; display: flex; align-items: center; gap: 36px; padding-left: 10px; font-size: 20px; line-height: 24px; white-space: nowrap; }
.slide-foot { flex: 1; display: flex; justify-content: flex-end; padding: 103px 41px 0 0; }
.slide-foot p { margin: 0; width: 180px; text-align: center; font-size: 20px; line-height: 24px; color: #5e5e6e; }
.bars { height: 14px; margin: 0 -3px 0 -1px; display: flex; justify-content: space-between; flex: none; }
.bars i { width: 431px; }

/* status */
.status { position: relative; height: 27px; background: #f2f2f2; display: flex; align-items: center; flex: none; font-size: 15px; }
.status > * { flex: none; }
.st-count { margin-left: -7px; width: 79px; white-space: nowrap; }
.st-notes { margin-left: 23px; }
.st-lang { margin-left: 22px; width: 68px; white-space: nowrap; }
.st-acc { margin-left: 22px; }
.st-a11y { margin-left: 3px; width: 98px; white-space: nowrap; }
.st-comment { margin-left: 973px; width: 31px; white-space: nowrap; }
.view { width: 50px; height: 27px; display: flex; align-items: center; justify-content: center; margin-right: 0; }
.view.active { margin-left: 21px; background: #c6c6c6; }
.zoom { display: flex; align-items: center; margin-left: 8px; }
.minus { width: 10px; height: 1px; background: #444; }
.plus { width: 10px; height: 10px; margin-left: 7px; background: linear-gradient(#444, #444) center / 10px 1px no-repeat, linear-gradient(#444, #444) center / 1px 10px no-repeat; }
.track { position: relative; width: 123px; height: 1px; margin-left: 7px; background: #444; display: block; }
.track b { position: absolute; left: 50px; top: -7px; width: 6px; height: 14px; background: #6b6b6b; }
.track u { position: absolute; left: 61px; top: -4px; width: 1px; height: 9px; background: #666; }

.ime { position: absolute; left: 1092px; top: -5px; width: 222px; height: 31px; background: #fff; display: flex; align-items: center; box-shadow: 0 1px 1px rgba(0,0,0,.12); }
.ime > * { flex: none; }
.ime-s { position: absolute; left: 2px; top: -5px; width: 35px; height: 35px; border-radius: 5px; background: #e8632c; color: #fff; font: 700 33px/35px "Liberation Sans", sans-serif; text-align: center; transform: rotate(-15deg); }
.ime-zh { margin-left: 48px; font-size: 17px; font-weight: 700; color: #1f78c8; line-height: 20px; }
.ime-punc { margin-left: 16px; width: 14px; font: 700 17px/20px "Liberation Sans", sans-serif; color: #1f78c8; }
.ime-mic { margin-left: 15px; height: 22px; }
.ime-kb { margin-left: 14px; }
.ime-shirt { margin-left: 12px; }
.ime-apps { margin-left: 13px; }

/* taskbar */
.taskbar { position: relative; height: 50px; flex: none; display: flex; align-items: stretch; background: linear-gradient(90deg, #22343e, #1d2d3f); color: #fff; }
.tb-start { width: 10px; height: 18px; margin: 13px 0 0 -6px; border: 1.500px solid #e8e8e8; border-radius: 50%; flex: none; }
.tb { position: relative; width: 62px; display: flex; align-items: center; justify-content: center; flex: none; }
.tb-first { margin: 0 6px 0 21px; }
.tb-first, .tb { padding-bottom: 6px; }
.run::after { content: ""; position: absolute; left: 6px; right: 6px; bottom: 0; height: 3px; background: #76b0d8; }
.run.on { background: #47555f; }
.run.on::after { left: 0; right: 0; }
.ic-xing { width: 26px; height: 28px; background: #c9c4bc; color: #b23a3a; font: 700 12px/13px "Noto Sans CJK SC", sans-serif; text-align: center; transform: rotate(-4deg); }
.ic-163 { width: 28px; height: 29px; background: #d01c2a; border-radius: 5px; display: flex; align-items: center; justify-content: center; }
.ic-mt { width: 27px; height: 29px; background: #0f66e0; border-radius: 4px; display: flex; align-items: center; justify-content: center; }
.ic-ppt { width: 29px; height: 29px; border-radius: 50%; background: linear-gradient(90deg, #c8452a 50%, #ef8a63); display: flex; align-items: center; padding-left: 4px; }
.ic-ppt em { font: 700 13px/15px "Liberation Sans", sans-serif; color: #fff; }
.cursor { position: absolute; left: 652px; top: 43px; }
.tray { margin-left: 802px; display: flex; align-items: center; flex: none; padding-bottom: 0; }
.tray > * { flex: none; }
.t2 { margin-left: 14px; }
.t3 { margin-left: 14px; width: 20px; height: 20px; border-radius: 50%; background: #d8c23a; box-shadow: inset 0 -3px 0 #3d8f4a, inset 0 3px 0 #3d8f4a; display: flex; align-items: center; justify-content: center; }
.t3 i { width: 8px; height: 8px; background: linear-gradient(#2f8f3f, #2f8f3f) center / 8px 2px no-repeat, linear-gradient(#2f8f3f, #2f8f3f) center / 2px 8px no-repeat; }
.t4 { margin-left: 10px; }
.t5 { margin-left: 14px; }
.t6 { margin-left: 11px; }
.t7 { margin-left: 15px; }
.clock { margin-left: 17px; width: 80px; display: flex; flex-direction: column; align-items: center; font: 16px/24px "Noto Sans", sans-serif; color: #f0f0f0; white-space: nowrap; }

/* overlays */
.meeting { position: absolute; left: 770px; top: 0; width: 189px; height: 26px; background: rgba(82, 44, 34, .96); border-radius: 0 0 7px 7px; box-shadow: 0 1px 3px rgba(0,0,0,.4); display: flex; align-items: center; padding: 0 0 2px 9px; color: #e6dcd8; white-space: nowrap; }
.meeting > * { flex: none; }
.ghost { position: absolute; left: 8px; top: 8px; font-size: 15px; line-height: 20px; height: 18px; overflow: hidden; color: rgba(255, 255, 255, .2); }
.dot { width: 10px; height: 10px; margin: 0 0 4px -4px; border-radius: 50%; background: #22c06c; }
.mt-name { margin-left: 8px; }
.cloud { margin: 0 0 0 10px; }
.mt-rec { margin-left: 3px; }
.mark { position: absolute; width: 24px; height: 6px; background: #12c77c; }
.m-tl { left: 0; top: 0; }
.m-tr { right: 0; top: 0; }
.m-bl { left: 0; bottom: 0; }
.m-br { right: 0; bottom: 0; }
```
